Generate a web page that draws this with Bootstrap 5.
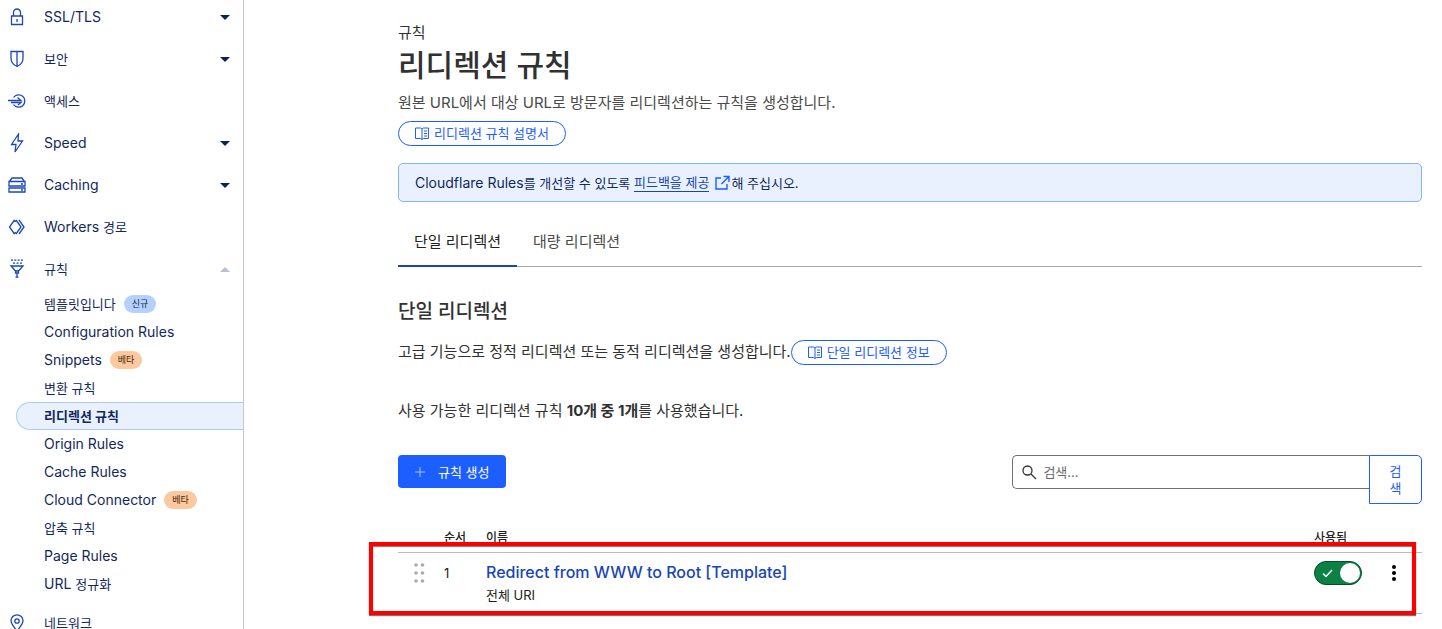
<!DOCTYPE html>
<html lang="ko">
<head>
<meta charset="utf-8">
<meta name="viewport" content="width=device-width, initial-scale=1">
<title>리디렉션 규칙</title>
<link href="https://cdn.jsdelivr.net/npm/bootstrap@5.3.0/dist/css/bootstrap.min.css" rel="stylesheet">
<style>
body{font-family:Inter,"Noto Sans CJK KR",sans-serif;font-size:15px;line-height:24px;color:#313131;background:#fff}
svg{display:block;flex:none}
.ko{font-size:13px}
.latin{font-size:14px}
/* sidebar */
.side-nav{width:244px;border-right:1px solid #c6c6c6;color:#12285a;font-size:14px}
.side-list{margin-top:-4px}
.side-link{height:42px;padding:0 11px 0 8px;color:#12285a;width:100%}
.side-link .icon{width:18px;height:20px;margin-right:18px;fill:none;stroke:#1a48b8;stroke-width:1.3}
.caret{width:10px;height:5px;margin:0 2px;fill:#0a2350}
.sub-link{height:28px;margin-left:16px;padding-left:27px;color:#12285a;border:1px solid transparent}
.sub-link.current{background:#e9f1ff;border-color:#a9cbfb;border-right:0;border-radius:14px 0 0 14px;font-weight:700}
.tag{font-size:9px;line-height:18px;padding:0 8px;border-radius:9px;background:#b3d1fc;color:#12285a}
.tag-beta{background:#fbc89f;color:#4c2408}
/* content */
.content-area{max-width:1064px;padding:21px 20px 0}
h1{font-size:30px;line-height:40px;font-weight:500;margin:0 0 6px}
h2{font-size:19px;line-height:28px;font-weight:500;margin:31px 0 14px}
.intro{margin-bottom:6px;color:#4a4a4a}
.pill{height:25px;padding:0 16px 0 15px;font-size:13px;line-height:23px;color:#1d5eff;border:1px solid #1d5eff;border-radius:13px}
.pill svg{fill:none;stroke:#1d5eff}
.notice{margin-top:17px;padding:0 16px;height:39px;background:#e9f1ff;border:1px solid #82b6f8;border-radius:5px;color:#12285a;font-size:13px}
.notice a{color:#1846b5}
.notice a span{border-bottom:1px solid #1846b5;line-height:18px}
.tab-bar{margin-top:16px;border-bottom:1px solid #aaa}
.tab-bar button{height:48px;padding:0 16px;border:0;background:none;color:#4a4a4a}
.tab-bar .active{color:#222;border-bottom:2px solid #1846b5;height:49px;margin-bottom:-1px}
.usage{margin:34px 0 32px}
.make-btn{height:33px;padding:0 16px;font-size:13px;color:#fff;background:#1d5eff;border:0;border-radius:4px}
.find-form{width:40%}
.find-box{height:34px;border:1px solid #6e6e6e;border-right:0;border-radius:5px 0 0 5px;padding-left:9px}
.find-box input{border:0;outline:0;font-size:13px;background:none;padding:0 6px}
.find-box input::placeholder{color:#6a6a6a}
.find-btn{width:53px;height:49px;padding:0 19px;border:1px solid #1d5eff;border-radius:0 5px 5px 0;background:#fff;color:#1d5eff;font-size:13px;line-height:17px;word-break:break-all}
.rules{margin-top:18px}
.rules table{font-size:13px;color:#222}
.rules th{height:30px;font-size:12px;font-weight:500;padding:2px 0 0;border-bottom:1px solid #bbb;line-height:20px}
.rules td{height:61px;padding:8px 0 0;border-bottom:1px solid #bbb;vertical-align:top}
.rule-name{font-size:16px;line-height:22px;font-weight:500;color:#1846b5}
.col-grip{width:46px}.col-num{width:42px}.col-on{width:66px}.col-menu{width:42px}
.switch{appearance:none;display:block;width:48px;height:24px;margin:0;border:1px solid #0a4a28;border-radius:12px;background:url("data:image/svg+xml,%3Csvg xmlns='http://www.w3.org/2000/svg' viewBox='0 0 46 22'%3E%3Ccircle cx='35' cy='11' r='10' fill='white'/%3E%3Cpath d='M8 11.5l3 3 6-6.5' fill='none' stroke='white' stroke-width='1.5'/%3E%3C/svg%3E") #0d8044}
.frame{position:absolute;left:-29px;right:6px;top:20px;height:73px;border:4px solid red;box-shadow:0 1px 1px #777,inset 0 1px 1px #777;pointer-events:none}
</style>
</head>
<body>
<svg class="d-none">
<symbol id="book" viewBox="0 0 14 13"><path d="M.5 1H5.500L7 2L8.500 1H13.500V11.500H8.500L7 12.500L5.500 11.500H.5zM7 2V12.500M9 4h3M9 6.500h3M9 9h3"/></symbol>
<symbol id="down" viewBox="0 0 10 5"><path d="M0 0h10L5 5z"/></symbol>
</svg>
<div class="d-flex vh-100">
<nav class="side-nav flex-shrink-0 overflow-hidden">
<div class="side-list">
<a href="#" class="side-link d-flex align-items-center text-decoration-none"><svg class="icon" viewBox="0 0 18 20"><path d="M3.500 9h11v8.500h-11zM5.500 9V5.500a3.500 3.500 0 0 1 7 0V9M9 12v3"/></svg>SSL/TLS<svg class="caret ms-auto"><use href="#down"/></svg></a>
<a href="#" class="side-link d-flex align-items-center text-decoration-none"><svg class="icon" viewBox="0 0 18 20"><path d="M3 2.500h12V9c0 4-2.500 7-6 8.500C5.500 16 3 13 3 9zM9 2.500v15"/></svg><span class="ko">보안</span><svg class="caret ms-auto"><use href="#down"/></svg></a>
<a href="#" class="side-link d-flex align-items-center text-decoration-none"><svg class="icon" viewBox="0 0 18 20"><path d="M5.500 6.500a6.200 6.200 0 1 1 0 7M0 9.500h13L9.500 6.500M3 11.500h10L10 14"/></svg><span class="ko">액세스</span></a>
<a href="#" class="side-link d-flex align-items-center text-decoration-none"><svg class="icon" viewBox="0 0 18 20"><path d="M10.500 1L3.500 11.500H8L7 19l7.500-11H10z"/></svg>Speed<svg class="caret ms-auto"><use href="#down"/></svg></a>
<a href="#" class="side-link d-flex align-items-center text-decoration-none"><svg class="icon" viewBox="0 0 18 20"><path d="M1.500 6.500L4 3h10l2.500 3.500zM1 6.500h16v4.500H1zM1 13h16v4H1zM13 9h2M13 15h2"/></svg>Caching<svg class="caret ms-auto"><use href="#down"/></svg></a>
<a href="#" class="side-link d-flex align-items-center text-decoration-none"><svg class="icon" viewBox="0 0 18 20"><path d="M6.500 3L1.500 10l5 7M8 3l5 7-5 7M11 3l5 7-5 7M6.500 3l1 2M6.500 17l1-2"/></svg><span>Workers <span class="ko">경로</span></span></a>
<a href="#" class="side-link d-flex align-items-center text-decoration-none"><svg class="icon" viewBox="0 0 18 20"><path d="M3 1.200h12" stroke-dasharray="2 1.300"/><path d="M5 4.200h9" stroke-dasharray="2 1.500"/><path d="M3 7h12l-4.500 5h-3zM7.500 11v3h3v-3M9 14v4M7.500 18.200h3"/></svg><span class="ko">규칙</span><svg class="caret ms-auto" viewBox="0 0 10 5"><path fill="#b9c0cf" d="M0 5h10L5 0z"/></svg></a>
<div class="mb-1">
<a href="#" class="sub-link d-flex align-items-center gap-2 text-decoration-none"><span class="ko">템플릿입니다</span><span class="tag">신규</span></a>
<a href="#" class="sub-link d-flex align-items-center text-decoration-none">Configuration Rules</a>
<a href="#" class="sub-link d-flex align-items-center gap-2 text-decoration-none">Snippets<span class="tag tag-beta">베타</span></a>
<a href="#" class="sub-link d-flex align-items-center text-decoration-none ko">변환 규칙</a>
<a href="#" class="sub-link current d-flex align-items-center text-decoration-none ko">리디렉션 규칙</a>
<a href="#" class="sub-link d-flex align-items-center text-decoration-none">Origin Rules</a>
<a href="#" class="sub-link d-flex align-items-center text-decoration-none">Cache Rules</a>
<a href="#" class="sub-link d-flex align-items-center gap-2 text-decoration-none">Cloud Connector<span class="tag tag-beta">베타</span></a>
<a href="#" class="sub-link d-flex align-items-center text-decoration-none ko">압축 규칙</a>
<a href="#" class="sub-link d-flex align-items-center text-decoration-none">Page Rules</a>
<a href="#" class="sub-link d-flex align-items-center text-decoration-none"><span>URL <span class="ko">정규화</span></span></a>
</div>
<a href="#" class="side-link d-flex align-items-center text-decoration-none"><svg class="icon" viewBox="0 0 18 20"><path d="M9 18C6 14 3 11 3 7.800a6 6 0 0 1 12 0C15 11 12 14 9 18z"/><circle cx="9" cy="8" r="2.200"/></svg><span class="ko">네트워크</span></a>
</div>
</nav>
<main class="flex-grow-1 overflow-auto">
<div class="content-area ms-auto">
<div>규칙</div>
<h1>리디렉션 규칙</h1>
<p class="intro">원본 URL에서 대상 URL로 방문자를 리디렉션하는 규칙을 생성합니다.</p>
<div class="d-flex"><a href="#" class="pill d-flex align-items-center gap-1 text-decoration-none"><svg width="16" height="13"><use href="#book"/></svg>리디렉션 규칙 설명서</a></div>
<div class="notice d-flex align-items-center"><span><span class="latin">Cloudflare Rules</span>를 개선할 수 있도록&nbsp;</span><a href="#" class="d-flex align-items-center gap-1 text-decoration-none"><span>피드백을 제공</span><svg width="18" height="16" viewBox="-1 0 18 16" fill="none" stroke="#1d5eff" stroke-width="1.400"><path d="M7 3H2v11h11V9M9.500 1.500H15V7M15 1.500L7.500 9"/></svg></a><span>해 주십시오.</span></div>
<div class="tab-bar d-flex" role="tablist"><button type="button" role="tab" aria-selected="true" class="active">단일 리디렉션</button><button type="button" role="tab" aria-selected="false">대량 리디렉션</button></div>
<h2>단일 리디렉션</h2>
<div class="d-flex align-items-start"><span>고급 기능으로 정적 리디렉션 또는 동적 리디렉션을 생성합니다.</span><a href="#" class="pill d-flex align-items-center gap-1 text-decoration-none"><svg width="16" height="13"><use href="#book"/></svg>단일 리디렉션 정보</a></div>
<p class="usage">사용 가능한 리디렉션 규칙 <b>10개 중 1개</b>를 사용했습니다.</p>
<div class="d-flex justify-content-between align-items-start">
<button type="button" class="make-btn d-flex align-items-center"><svg width="12" height="12" viewBox="0 0 12 12" stroke="#a9c4ff"><path d="M6 1v10M1 6h10"/></svg><span class="ms-2 ps-1">규칙 생성</span></button>
<form class="find-form d-flex align-items-start"><label class="find-box flex-grow-1 d-flex align-items-center"><svg width="15" height="15" viewBox="0 0 15 15" fill="none" stroke="#333" stroke-width="1.300"><circle cx="5.500" cy="5.500" r="4.500"/><path d="M9 9l5 5"/></svg><input type="search" class="flex-grow-1" placeholder="검색..." aria-label="검색"></label><button type="button" class="find-btn">검색</button></form>
</div>
<div class="rules position-relative">
<table class="w-100">
<thead><tr><th class="col-grip"></th><th class="col-num">순서</th><th>이름</th><th class="col-on">사용됨</th><th class="col-menu"></th></tr></thead>
<tbody><tr><td><svg class="ms-3" width="11" height="24" viewBox="0 0 11 24" fill="#aaa"><circle cx="2" cy="4" r="1.800"/><circle cx="8.500" cy="4" r="1.800"/><circle cx="2" cy="12" r="1.800"/><circle cx="8.500" cy="12" r="1.800"/><circle cx="2" cy="20" r="1.800"/><circle cx="8.500" cy="20" r="1.800"/></svg></td><td>1</td><td><a href="#" class="rule-name d-block text-decoration-none">Redirect from WWW to Root [Template]</a>전체 URI</td><td><input type="checkbox" class="switch" checked aria-label="사용됨"></td><td><button type="button" class="btn p-0 border-0 d-block ms-2" aria-label="메뉴"><svg width="12" height="24" viewBox="0 0 12 24"><circle cx="6" cy="6" r="2"/><circle cx="6" cy="12" r="2"/><circle cx="6" cy="18" r="2"/></svg></button></td></tr></tbody>
</table>
<div class="frame"></div>
</div>
</div>
</main>
</div>
<script src="https://cdn.jsdelivr.net/npm/bootstrap@5.3.0/dist/js/bootstrap.bundle.min.js"></script>
</body>
</html>
